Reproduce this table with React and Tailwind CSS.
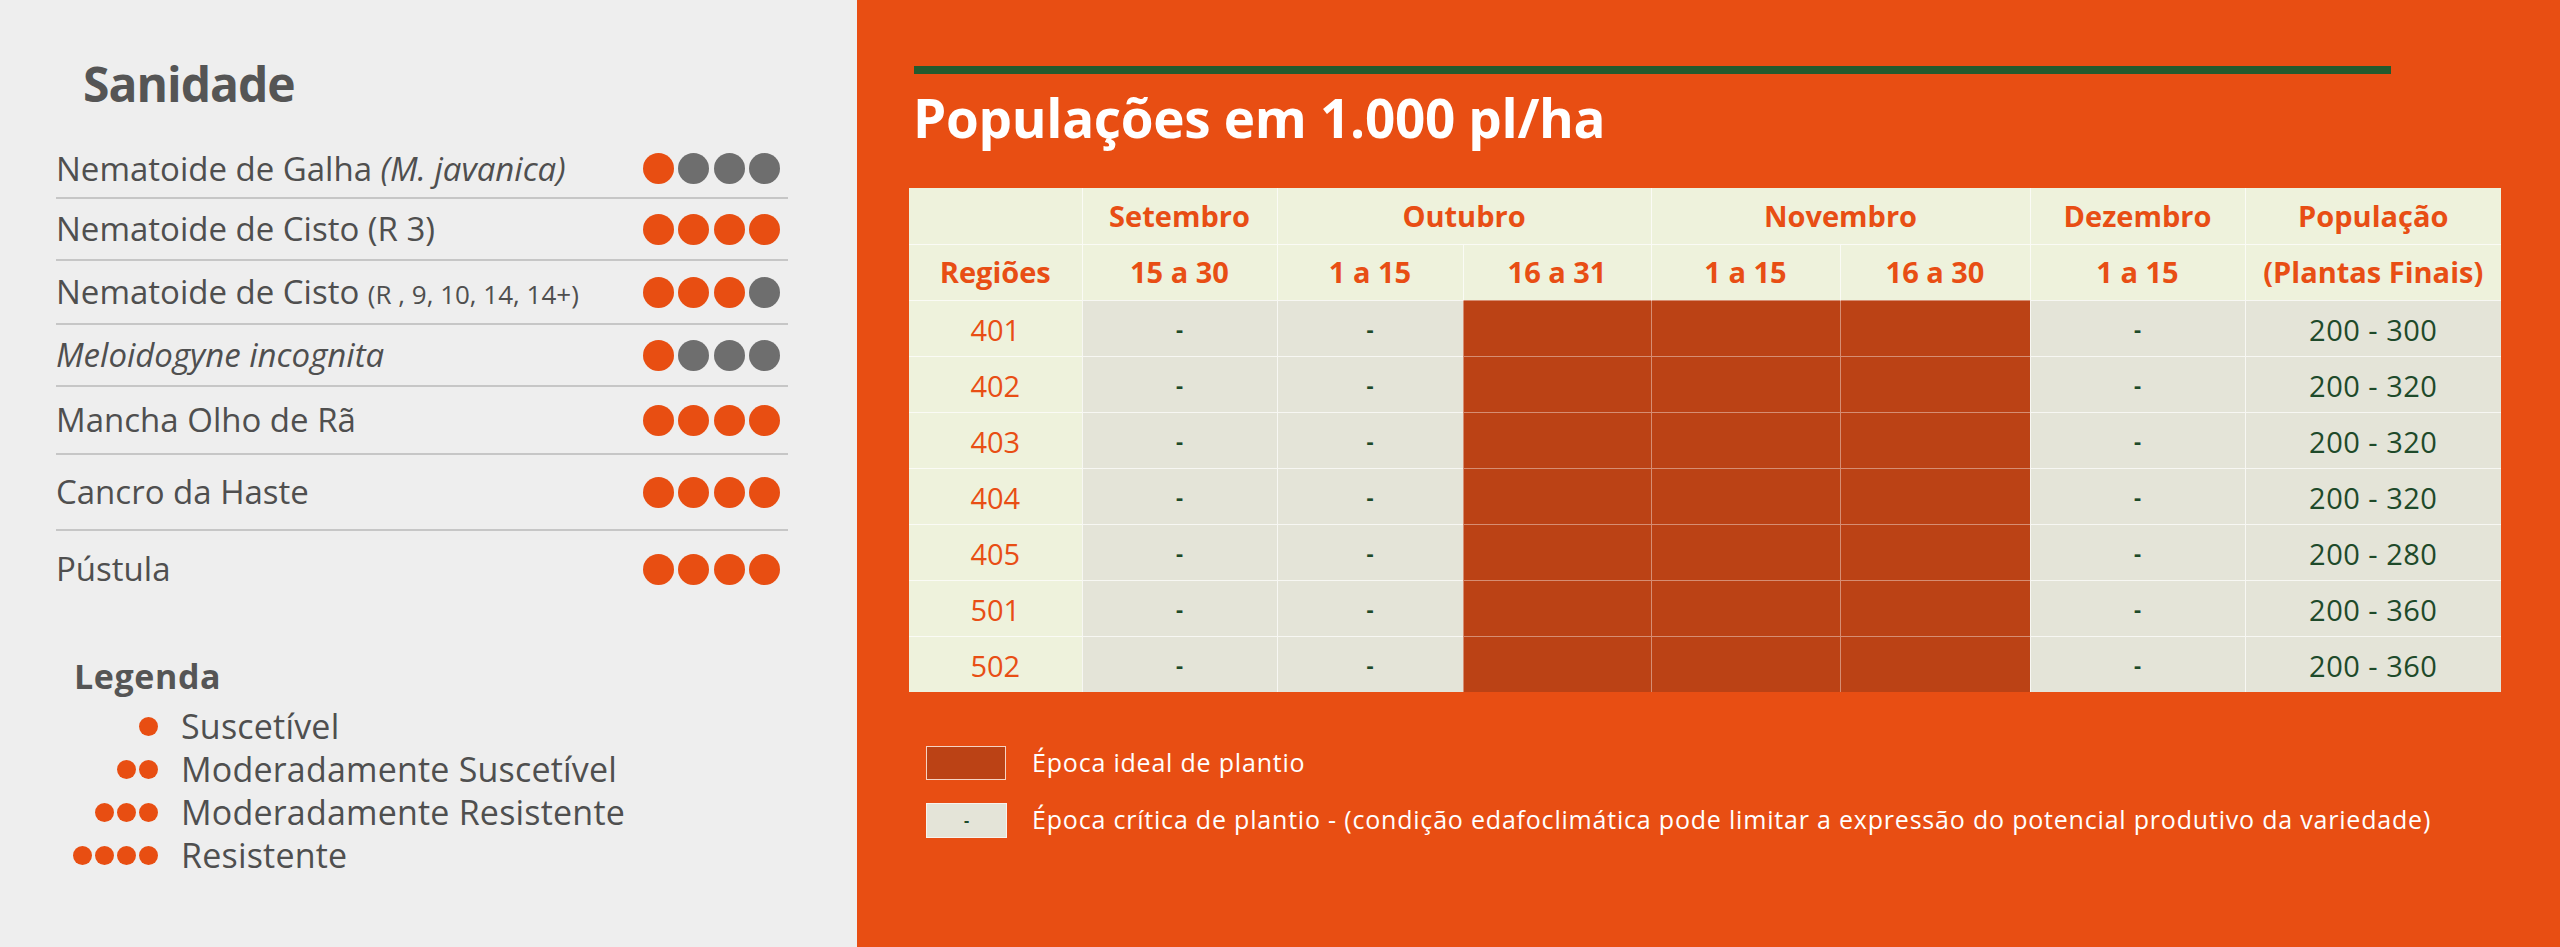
import React from "react";

const ORANGE = "bg-[#e84e13]";

const diseases = [
  { h: "h-[57px]", score: 1, label: <>Nematoide de Galha <i>(M. javanica)</i></> },
  { h: "h-[60px]", score: 4, label: <>Nematoide de Cisto (R 3)</> },
  {
    h: "h-[62px]",
    score: 3,
    label: (
      <>
        Nematoide de Cisto <span className="text-[26px]">(R , 9, 10, 14, 14+)</span>
      </>
    ),
  },
  { h: "h-[60px]", score: 1, label: <i>Meloidogyne incognita</i> },
  { h: "h-[66px]", score: 4, label: <>Mancha Olho de Rã</> },
  { h: "h-[74px]", score: 4, label: <>Cancro da Haste</> },
  { h: "h-[76px]", score: 4, label: <>Pústula</> },
];

const legend = [
  { n: 1, label: "Suscetível" },
  { n: 2, label: "Moderadamente Suscetível" },
  { n: 3, label: "Moderadamente Resistente" },
  { n: 4, label: "Resistente" },
];

const rows = [
  ["401", "200 - 300"],
  ["402", "200 - 320"],
  ["403", "200 - 320"],
  ["404", "200 - 320"],
  ["405", "200 - 280"],
  ["501", "200 - 360"],
  ["502", "200 - 360"],
];

function Dots({ score }) {
  return (
    <div className="flex gap-[4.5px]">
      {[0, 1, 2, 3].map((i) => (
        <span
          key={i}
          className={
            i < score
              ? "h-[31px] w-[31px] rounded-full bg-[#e84e12]"
              : "h-[31px] w-[31px] rounded-full bg-[#6e6e6e]"
          }
        />
      ))}
    </div>
  );
}

function Sanidade() {
  return (
    <div className="w-[857px] shrink-0 bg-[#eeeeee] pl-[56px] pt-[60px]">
      <h2 className="pl-[27px] text-[48px] font-bold leading-none tracking-[-1px] text-[#555555]">
        Sanidade
      </h2>

      <div className="mt-[32px] w-[732px]">
        {diseases.map((d, i) => (
          <div key={i}>
            {i > 0 && <div className="h-[2px] bg-[#c6c6c6]" />}
            <div className={`flex items-center justify-between pr-[8px] ${d.h}`}>
              <span className="text-[33px] text-[#4f4f4f]">{d.label}</span>
              <Dots score={d.score} />
            </div>
          </div>
        ))}
      </div>

      <h3 className="mt-[52px] pl-[18px] text-[34px] font-bold leading-none tracking-[0.6px] text-[#555555]">
        Legenda
      </h3>
      <div className="mt-[12px]">
        {legend.map((l) => (
          <div key={l.n} className="flex h-[43px] items-center">
            <div className="flex w-[102px] justify-end gap-[3px]">
              {Array.from({ length: l.n }).map((_, i) => (
                <span key={i} className="h-[19px] w-[19px] rounded-full bg-[#e84e12]" />
              ))}
            </div>
            <span className="ml-[23px] text-[34px] tracking-[0.2px] text-[#4f4f4f]">{l.label}</span>
          </div>
        ))}
      </div>
    </div>
  );
}

const head = "h-[56px] bg-[#eef2dc] text-center align-middle text-[29px] font-bold text-[#e84e14]";
const crit = "bg-[#e4e4d8] text-center align-middle text-[22px] font-bold text-[#1e4a2a]";
const ideal = "bg-[#bb4215]";

function Tabela() {
  return (
    <table className="w-[1592px] table-fixed border-collapse">
      <colgroup>
        <col className="w-[173px]" />
        <col className="w-[195px]" />
        <col className="w-[186px]" />
        <col className="w-[188px]" />
        <col className="w-[189px]" />
        <col className="w-[190px]" />
        <col className="w-[215px]" />
        <col className="w-[256px]" />
      </colgroup>
      <thead>
        <tr>
          <th className={head}></th>
          <th className={`${head} border-l border-white/70`}>Setembro</th>
          <th colSpan={2} className={`${head} border-l border-white/70`}>Outubro</th>
          <th colSpan={2} className={`${head} border-l border-white/70`}>Novembro</th>
          <th className={`${head} border-l border-white/70`}>Dezembro</th>
          <th className={`${head} border-l border-white/70`}>População</th>
        </tr>
        <tr>
          <th className={`${head} border-t border-white/70`}>Regiões</th>
          {["15 a 30", "1 a 15", "16 a 31", "1 a 15", "16 a 30", "1 a 15"].map((t, i) => (
            <th key={i} className={`${head} border-l border-t border-white/70`}>{t}</th>
          ))}
          <th className={`${head} border-l border-t border-white/70`}>(Plantas Finais)</th>
        </tr>
      </thead>
      <tbody>
        {rows.map(([reg, pop]) => (
          <tr key={reg} className="h-[56px]">
            <td className="border-t border-white/70 bg-[#eef2dc] pt-[3px] text-center align-middle text-[29px] text-[#e84e14]">
              {reg}
            </td>
            <td className={`${crit} border-l border-t border-white/70`}>-</td>
            <td className={`${crit} border-l border-t border-white/70`}>-</td>
            <td className={`${ideal} border-l border-t border-white/40`}></td>
            <td className={`${ideal} border-l border-t border-white/40`}></td>
            <td className={`${ideal} border-l border-t border-white/40`}></td>
            <td className={`${crit} border-l border-t border-white/70`}>-</td>
            <td className="border-l border-t border-white/70 bg-[#e4e4d8] pt-[3px] text-center align-middle text-[29px] tracking-[0.5px] text-[#1e4a2a]">
              {pop}
            </td>
          </tr>
        ))}
      </tbody>
    </table>
  );
}

function Populacoes() {
  return (
    <div className={`flex-1 ${ORANGE} pl-[52px]`}>
      <div className="ml-[5px] mt-[66px] h-[8px] w-[1477px] bg-[#235a2e]" />
      <h1 className="ml-[4px] mt-[17px] text-[53px] font-bold leading-none tracking-[-0.3px] text-white">
        Populações em 1.000 pl/ha
      </h1>
      <div className="mt-[44px]">
        <Tabela />
      </div>

      <div className="ml-[17px] mt-[53px] flex flex-col gap-[21px]">
        <div className="flex h-[36px] items-center">
          <div className="h-[34px] w-[80px] border border-[#f6d3c3] bg-[#bb4215]" />
          <span className="ml-[26px] text-[25px] tracking-[0.8px] text-white">Época ideal de plantio</span>
        </div>
        <div className="flex h-[36px] items-center">
          <div className="flex h-[35px] w-[81px] items-center justify-center border border-[#f7f3ee] bg-[#e4e4d8] text-[16px] font-bold leading-none text-[#1e4a2a]">
            -
          </div>
          <span className="ml-[25px] text-[25px] tracking-[0.8px] text-white">
            Época crítica de plantio - (condição edafoclimática pode limitar a expressão do potencial produtivo da variedade)
          </span>
        </div>
      </div>
    </div>
  );
}

export default function App() {
  return (
    <div className="flex h-[947px] w-[2560px] font-['Open_Sans',sans-serif]">
      <Sanidade />
      <Populacoes />
    </div>
  );
}
